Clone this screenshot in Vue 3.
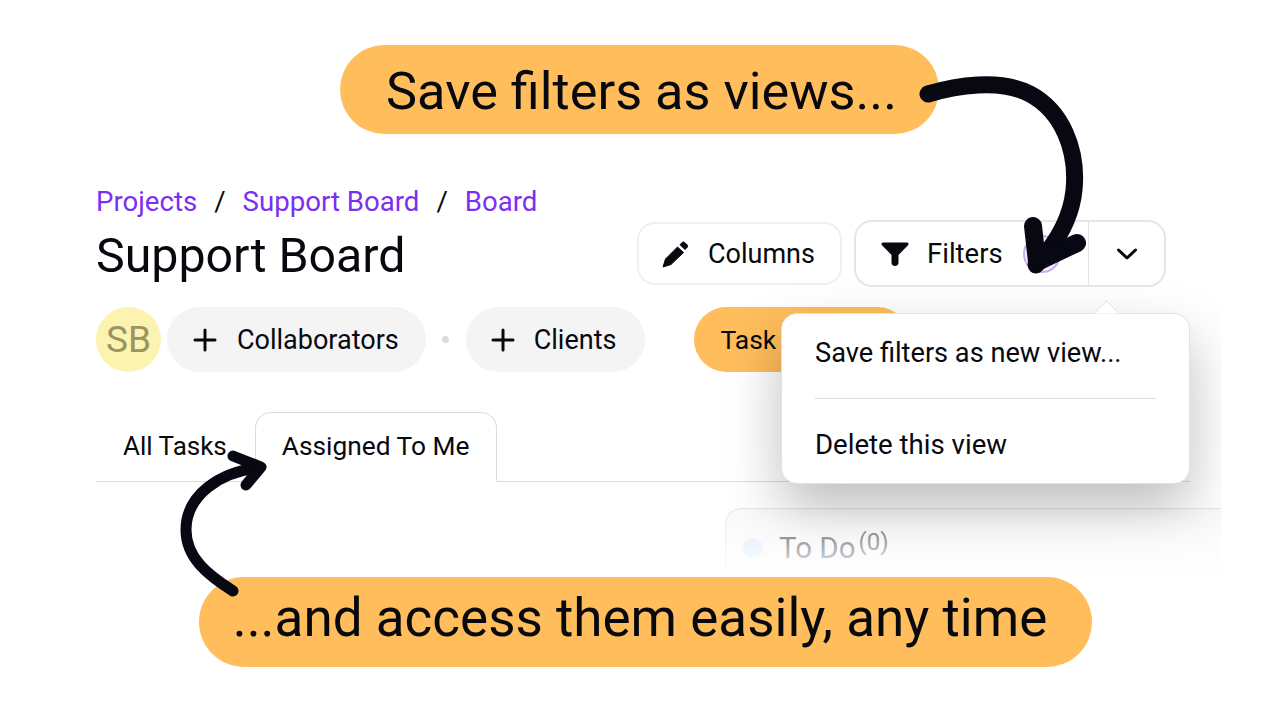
<script setup>
const crumbs = ['Projects', 'Support Board', 'Board']
</script>

<template>
  <div class="stage">
    <div class="board">
      <div class="top">
        <div class="heading">
          <nav class="crumbs">
            <template v-for="(c, i) in crumbs" :key="c">
              <span v-if="i" class="sep">/</span>
              <a class="crumb">{{ c }}</a>
            </template>
          </nav>
          <h1 class="title">Support Board</h1>
        </div>
        <div class="actions">
          <button class="btn columns">
            <svg class="ico" width="28" height="28" viewBox="0 0 28 28"><path fill="#08080f" stroke="#08080f" stroke-width="1" stroke-linejoin="round" d="M2 27L4.500 19L16.500 7L22.500 12.500L10 24.500Z"/><path fill="#08080f" d="M18.500 4.800L21 2.200a2 2 0 0 1 2.800 0L26.500 4.700a2 2 0 0 1 0 2.800L24 10Z"/></svg>
            <span>Columns</span>
          </button>
          <div class="group">
            <div class="filters">
              <svg class="ico" width="28" height="24" viewBox="0 0 28 24"><path fill="#08080f" d="M2 .500h24a1.500 1.500 0 0 1 1.200 2.400L17.500 13v7.500a3.500 3.500 0 0 1-7 0V13L.8 2.900A1.500 1.500 0 0 1 2 .500z"/></svg>
              <span class="flabel">Filters</span>
              <span class="badge"></span>
            </div>
            <div class="chev">
              <svg width="22" height="14" viewBox="0 0 22 14"><path d="M2.500 3l8.500 8 8.500-8" fill="none" stroke="#08080f" stroke-width="3" stroke-linecap="round" stroke-linejoin="round"/></svg>
            </div>
          </div>
        </div>
      </div>

      <div class="people">
        <div class="avatar">SB</div>
        <button class="pill">
          <svg width="24" height="24" viewBox="0 0 24 24"><path d="M12 2v20M2 12h20" stroke="#08080f" stroke-width="3" stroke-linecap="round"/></svg>
          <span>Collaborators</span>
        </button>
        <i class="dot"></i>
        <button class="pill clients">
          <svg width="24" height="24" viewBox="0 0 24 24"><path d="M12 2v20M2 12h20" stroke="#08080f" stroke-width="3" stroke-linecap="round"/></svg>
          <span>Clients</span>
        </button>
        <div class="task">Task</div>
      </div>

      <div class="tabs">
        <span class="tab">All Tasks</span>
        <span class="tab active">Assigned To Me</span>
      </div>

      <div class="card">
        <i class="status"></i>
        <span class="cname">To Do</span><sup class="count">(0)</sup>
      </div>

      <div class="pop">
        <i class="caret"></i>
        <div class="item save">Save filters as new view...</div>
        <hr class="rule" />
        <div class="item del">Delete this view</div>
      </div>
      <div class="fade"></div>
    </div>

    <div class="bubble b1">Save filters as views...</div>
    <div class="bubble b2">...and access them easily, any time</div>

    <svg class="arrows" width="1280" height="720" viewBox="0 0 1280 720" fill="none" stroke="#070812" stroke-linecap="round" stroke-linejoin="round">
      <path stroke-width="17" d="M928 94C955 86 1000 78 1030 94C1062 111 1078 150 1074 190C1071 220 1055 245 1036 265"/>
      <path stroke-width="18" d="M1033 226L1037 262L1077 243"/>
      <path stroke-width="11" d="M233 591C208 575 186 558 186 530C186 495 220 472 258 468"/>
      <path stroke-width="11" d="M233 456L261 467L246 485"/>
    </svg>
  </div>
</template>

<style scoped>
.stage {
  position: relative;
  width: 1280px;
  height: 720px;
  overflow: hidden;
  background: #fff;
  font-family: Roboto, "Noto Sans", sans-serif;
  color: #08080f;
}
.board {
  position: relative;
  box-sizing: border-box;
  width: 1221px;
  height: 580px;
  padding: 188px 31px 0 96px;
  overflow: hidden;
}
.top {
  display: flex;
  justify-content: space-between;
  height: 99px;
  padding-right: 24px;
}
.crumbs {
  display: flex;
  gap: 17px;
  font-size: 27.600px;
  line-height: 27px;
  color: #7b2ff2;
}
.sep { color: #08080f; }
.title {
  margin: 18px 0 0;
  font-size: 48.300px;
  line-height: 46px;
  font-weight: 400;
}
.actions {
  display: flex;
  align-items: center;
  gap: 12px;
  margin-top: 32px;
  height: 67px;
  font-size: 27px;
}
.btn, .group {
  box-sizing: border-box;
  background: #fff;
  font: inherit;
  color: inherit;
}
.btn {
  display: flex;
  align-items: center;
  gap: 19px;
  width: 205px;
  height: 63px;
  padding: 0 0 0 22px;
  border: 2px solid #f0f0f2;
  border-radius: 18px;
}
.group {
  display: flex;
  width: 312px;
  height: 67px;
  border: 2px solid #e6e6ea;
  border-radius: 18px;
}
.filters {
  display: flex;
  align-items: center;
  flex: 1;
  padding-left: 25px;
  border-right: 1px solid #e2e2e6;
}
.flabel { margin-left: 18px; font-size: 27.500px; }
.badge {
  box-sizing: border-box;
  width: 38px;
  height: 38px;
  margin-left: 20px;
  border: 2px solid #c7aef5;
  border-radius: 50%;
  background: #f6f0ff;
}
.chev {
  display: flex;
  align-items: center;
  justify-content: center;
  width: 75px;
}
.people {
  display: flex;
  align-items: center;
  height: 65px;
  margin-top: 20px;
  font-size: 27px;
}
.avatar {
  display: flex;
  align-items: center;
  justify-content: center;
  width: 65px;
  height: 65px;
  border-radius: 50%;
  background: #fdf3b0;
  color: #9a9460;
  font-size: 37px;
}
.pill {
  display: flex;
  align-items: center;
  gap: 20px;
  height: 65px;
  margin-left: 6px;
  padding: 0 27px 0 26px;
  border: 0;
  border-radius: 33px;
  background: #f4f4f5;
  font: inherit;
  color: inherit;
}
.dot {
  width: 7px;
  height: 7px;
  margin: 0 17px 0 16px;
  border-radius: 50%;
  background: #dcdce0;
}
.clients { margin-left: 0; padding: 0 29px 0 25px; gap: 19px; }
.task {
  display: flex;
  align-items: center;
  box-sizing: border-box;
  width: 216px;
  height: 65px;
  margin-left: 49px;
  padding-left: 26px;
  border-radius: 33px;
  background: #ffbd5c;
  font-size: 26.500px;
}
.tabs {
  display: flex;
  align-items: flex-end;
  height: 69px;
  margin-top: 40px;
  border-bottom: 1px solid #dcdce0;
  font-size: 26px;
}
.tab {
  box-sizing: border-box;
  display: flex;
  align-items: center;
  height: 70px;
  padding: 0 27px 2px 26px;
  font-size: 26.300px;
}
.tab:first-child { padding: 0 28px 2px 27px; height: 69px; font-size: 26px; }
.active {
  position: relative;
  top: 1px;
  border: 1px solid #dcdce0;
  border-bottom-color: #fff;
  border-radius: 16px 16px 0 0;
  background: #fff;
}
.card {
  display: flex;
  align-items: center;
  box-sizing: border-box;
  width: 560px;
  height: 120px;
  margin: 26px 0 0 629px;
  padding: 0 0 40px 17px;
  border: 1px solid #e4e4e8;
  border-radius: 16px;
  background: #fafafa;
  font-size: 29.500px;
  color: #4f4f56;
}
.status {
  width: 20px;
  height: 20px;
  margin-right: 16px;
  border-radius: 50%;
  background: #dbeafe;
}
.count {
  align-self: flex-start;
  margin: 20px 0 0 3px;
  font-size: 24px;
  line-height: 26px;
}
.pop {
  position: absolute;
  left: 781px;
  top: 313px;
  box-sizing: border-box;
  width: 409px;
  height: 171px;
  padding: 0 33px;
  border: 1px solid #e2e2e6;
  border-radius: 16px;
  background: #fff;
  box-shadow: 0 26px 56px rgba(0, 0, 0, 0.26);
}
.caret {
  position: absolute;
  left: 315px;
  top: -10px;
  width: 18px;
  height: 18px;
  transform: rotate(45deg);
  background: #fff;
  border: 1px solid #e2e2e6;
  border-right: 0;
  border-bottom: 0;
  clip-path: polygon(0 0, 100% 0, 0 100%);
}
.item {
  display: flex;
  align-items: center;
  height: 77px;
}
.save { font-size: 27.200px; }
.del { font-size: 27.600px; }
.rule {
  margin: 7px 0;
  border: 0;
  border-top: 1px solid #dcdce0;
}
.fade {
  position: absolute;
  left: 0;
  right: 0;
  bottom: 0;
  height: 72px;
  background: linear-gradient(rgba(255, 255, 255, 0), #fff);
}
.bubble {
  position: absolute;
  display: flex;
  align-items: center;
  justify-content: center;
  box-sizing: border-box;
  height: 90px;
  border-radius: 45px;
  background: #ffbd5c;
  white-space: nowrap;
}
.b1 { left: 340px; top: 45px; width: 599px; height: 89px; font-size: 52.300px; padding: 2px 0 0 4px; }
.b2 { left: 199px; top: 577px; width: 893px; font-size: 53px; padding: 0 11px 9px 0; }
.arrows {
  position: absolute;
  left: 0;
  top: 0;
  pointer-events: none;
}
</style>
